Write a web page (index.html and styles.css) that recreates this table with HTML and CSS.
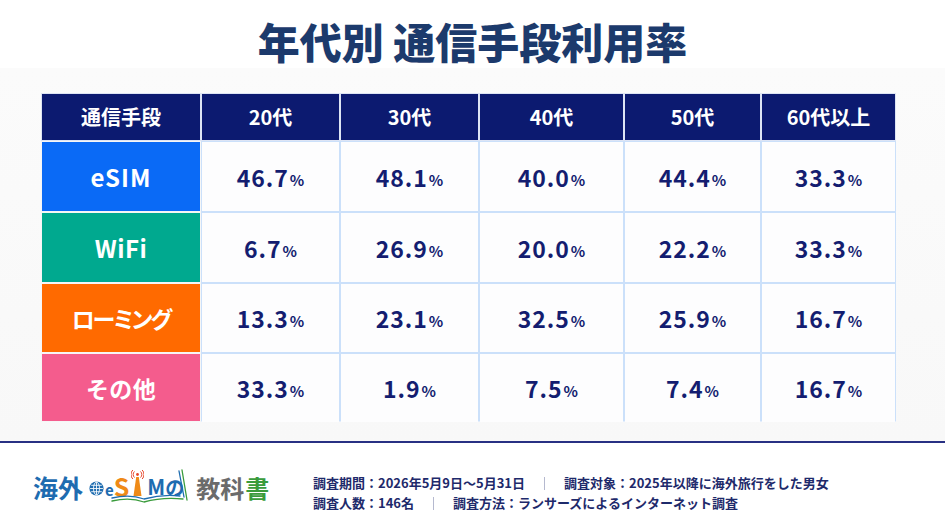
FILE: index.html
```html
<!DOCTYPE html>
<html lang="ja">
<head>
<meta charset="utf-8">
<title>年代別 通信手段利用率</title>
<link rel="stylesheet" href="styles.css">
</head>
<body>
<div class="page">
  <header class="title-bar">
    <h1 class="title">年代別 通信手段利用率</h1>
  </header>
  <main class="band">
    <div class="grid">
      <div class="hd">通信手段</div>
      <div class="hd">20代</div>
      <div class="hd">30代</div>
      <div class="hd">40代</div>
      <div class="hd">50代</div>
      <div class="hd">60代以上</div>

      <div class="lbl esim">eSIM</div>
      <div class="val">46.7<span class="pct">%</span></div>
      <div class="val">48.1<span class="pct">%</span></div>
      <div class="val">40.0<span class="pct">%</span></div>
      <div class="val">44.4<span class="pct">%</span></div>
      <div class="val">33.3<span class="pct">%</span></div>

      <div class="lbl wifi">WiFi</div>
      <div class="val">6.7<span class="pct">%</span></div>
      <div class="val">26.9<span class="pct">%</span></div>
      <div class="val">20.0<span class="pct">%</span></div>
      <div class="val">22.2<span class="pct">%</span></div>
      <div class="val">33.3<span class="pct">%</span></div>

      <div class="lbl roam">ローミング</div>
      <div class="val">13.3<span class="pct">%</span></div>
      <div class="val">23.1<span class="pct">%</span></div>
      <div class="val">32.5<span class="pct">%</span></div>
      <div class="val">25.9<span class="pct">%</span></div>
      <div class="val">16.7<span class="pct">%</span></div>

      <div class="lbl other">その他</div>
      <div class="val last">33.3<span class="pct">%</span></div>
      <div class="val last">1.9<span class="pct">%</span></div>
      <div class="val last">7.5<span class="pct">%</span></div>
      <div class="val last">7.4<span class="pct">%</span></div>
      <div class="val last">16.7<span class="pct">%</span></div>
    </div>
  </main>
  <div class="rule"></div>
  <footer class="footer">
    <div class="logo">
      <span class="lg-blue lg-big lg-kaigai">海外</span>
      <svg class="globe" width="15" height="15" viewBox="0 0 14 14">
        <circle cx="7" cy="7" r="6.6" fill="#1e6cb0"/>
        <g fill="none" stroke="#fff" stroke-width="0.8">
          <ellipse cx="7" cy="7" rx="2.8" ry="6"/>
          <line x1="7" y1="1" x2="7" y2="13"/>
          <line x1="1" y1="7" x2="13" y2="7"/>
          <line x1="2" y1="4" x2="12" y2="4"/>
          <line x1="2" y1="10" x2="12" y2="10"/>
        </g>
      </svg>
      <span class="lg-blue lg-e">e</span>
      <span class="lg-orange lg-s">S</span>
      <svg class="antenna" width="13" height="30" viewBox="0 0 13 30">
        <g fill="none" stroke="#e8452a" stroke-width="1">
          <path d="M3.5 3.5 A4 4 0 0 0 3.5 9.5"/>
          <path d="M9.5 3.5 A4 4 0 0 1 9.5 9.5"/>
          <path d="M1.8 2 A6.5 6.5 0 0 0 1.8 11"/>
          <path d="M11.2 2 A6.5 6.5 0 0 1 11.2 11"/>
        </g>
        <circle cx="6.5" cy="6.5" r="1.4" fill="#e8452a"/>
        <polygon points="5.2,9 7.8,9 10.5,28 2.5,28" fill="#ef8a17"/>
      </svg>
      <span class="lg-blue lg-m">M</span>
      <span class="lg-blue lg-no">の</span>
      <svg class="book" width="84" height="34" viewBox="0 0 84 34">
        <g fill="none" stroke-width="1.3" stroke-linecap="round">
          <path d="M2 29 Q20 25 34 30 Q52 25 70 27" stroke="#1e6cb0"/>
          <path d="M2 32 Q20 28 34 33 Q52 28 73 30" stroke="#3a9b3c"/>
          <path d="M69 2 L74 28" stroke="#1e6cb0"/>
          <path d="M72 1 L77 31" stroke="#3a9b3c"/>
        </g>
      </svg>
      <span class="lg-gray lg-big lg-kyo">教科</span><span class="lg-green lg-big lg-sho">書</span>
    </div>
    <div class="notes">
      <p>調査期間：2026年5月9日～5月31日<span class="sep"></span>調査対象：2025年以降に海外旅行をした男女</p>
      <p>調査人数：146名<span class="sep"></span>調査方法：ランサーズによるインターネット調査</p>
    </div>
  </footer>
</div>
</body>
</html>
```

FILE: styles.css
```css
* {
  box-sizing: border-box;
  margin: 0;
  padding: 0;
}

html, body {
  width: 945px;
  height: 532px;
  overflow: hidden;
  background: #ffffff;
}

body {
  font-family: "Noto Sans CJK JP", "Noto Sans", sans-serif;
}

.page {
  display: flex;
  flex-direction: column;
  height: 532px;
}

.title-bar {
  height: 68px;
  display: flex;
  justify-content: center;
  padding-top: 15px;
}

.title {
  font-size: 42px;
  font-weight: 900;
  line-height: 52px;
  color: #1c3a6c;
}

.band {
  height: 373px;
  background: linear-gradient(#fbfbfb, #f8f8f8);
  padding: 25px 0 0 41px;
}

.grid {
  display: grid;
  grid-template-columns: 160px 139px 139px 145px 137px 135px;
  grid-template-rows: 48px 71px 71px 70px 69px;
  width: 855px;
}

.grid > div {
  display: flex;
  align-items: center;
  justify-content: center;
  border: 1px solid transparent;
}

.hd {
  background: #0c1a70;
  border-color: #dde4f4 !important;
  color: #ffffff;
  font-size: 20px;
  font-weight: 700;
  padding-bottom: 2px;
}

.lbl {
  color: #ffffff;
  font-size: 23px;
  font-weight: 700;
  border-color: #f6f6f6 !important;
  letter-spacing: 0.3px;
}

.esim {
  background: #0a6af6;
  font-size: 24px;
  letter-spacing: 1px;
}

.wifi {
  background: #00a98f;
  font-size: 24px;
  letter-spacing: 0.5px;
}

.roam {
  background: #ff6a00;
  font-feature-settings: "palt";
  letter-spacing: -2px;
}

.other {
  background: #f45c8d;
}

.val {
  background: #fdfdfe;
  border-color: #cbe0fa !important;
  color: #141d70;
  font-size: 23px;
  font-weight: 700;
  letter-spacing: 1px;
}

.val.last {
  border-bottom-color: transparent !important;
}

.pct {
  font-size: 15px;
  letter-spacing: 0;
  margin-left: 1px;
  margin-top: 5px;
}

.rule {
  height: 2px;
  background: #283083;
}

.footer {
  flex: 1;
  display: flex;
  align-items: flex-start;
  padding: 26px 0 0 33px;
}

.logo {
  position: relative;
  width: 280px;
  height: 34px;
  display: flex;
  align-items: flex-end;
  font-weight: 700;
  line-height: 1;
}

.lg-big {
  font-size: 24px;
  padding-bottom: 3px;
}

.lg-kaigai {
  font-size: 25px;
}

.lg-blue { color: #1e6cb0; }
.lg-orange { color: #ef8a17; }
.lg-gray { color: #6b6b6b; }
.lg-green { color: #3a9b3c; }

.globe {
  margin: 0 1px 7px 6px;
}

.lg-e {
  font-size: 15px;
  padding-bottom: 6px;
}

.lg-s {
  font-size: 25px;
  padding-bottom: 4px;
}

.antenna {
  margin: 0 3px 5px 2px;
}

.lg-m {
  font-size: 21px;
  padding-bottom: 6px;
}

.lg-no {
  font-size: 19px;
  padding-bottom: 7px;
}

.book {
  position: absolute;
  left: 77px;
  top: 0;
}

.lg-kyo {
  margin-left: 12px;
}

.lg-sho {
  margin-left: 1px;
}

.notes {
  margin-top: 4px;
  color: #1e2a6b;
  font-size: 13px;
  font-weight: 700;
  line-height: 20px;
}

.sep {
  display: inline-block;
  width: 1px;
  height: 13px;
  background: #b5b9cf;
  margin: 0 19px;
  vertical-align: -2px;
}
```
